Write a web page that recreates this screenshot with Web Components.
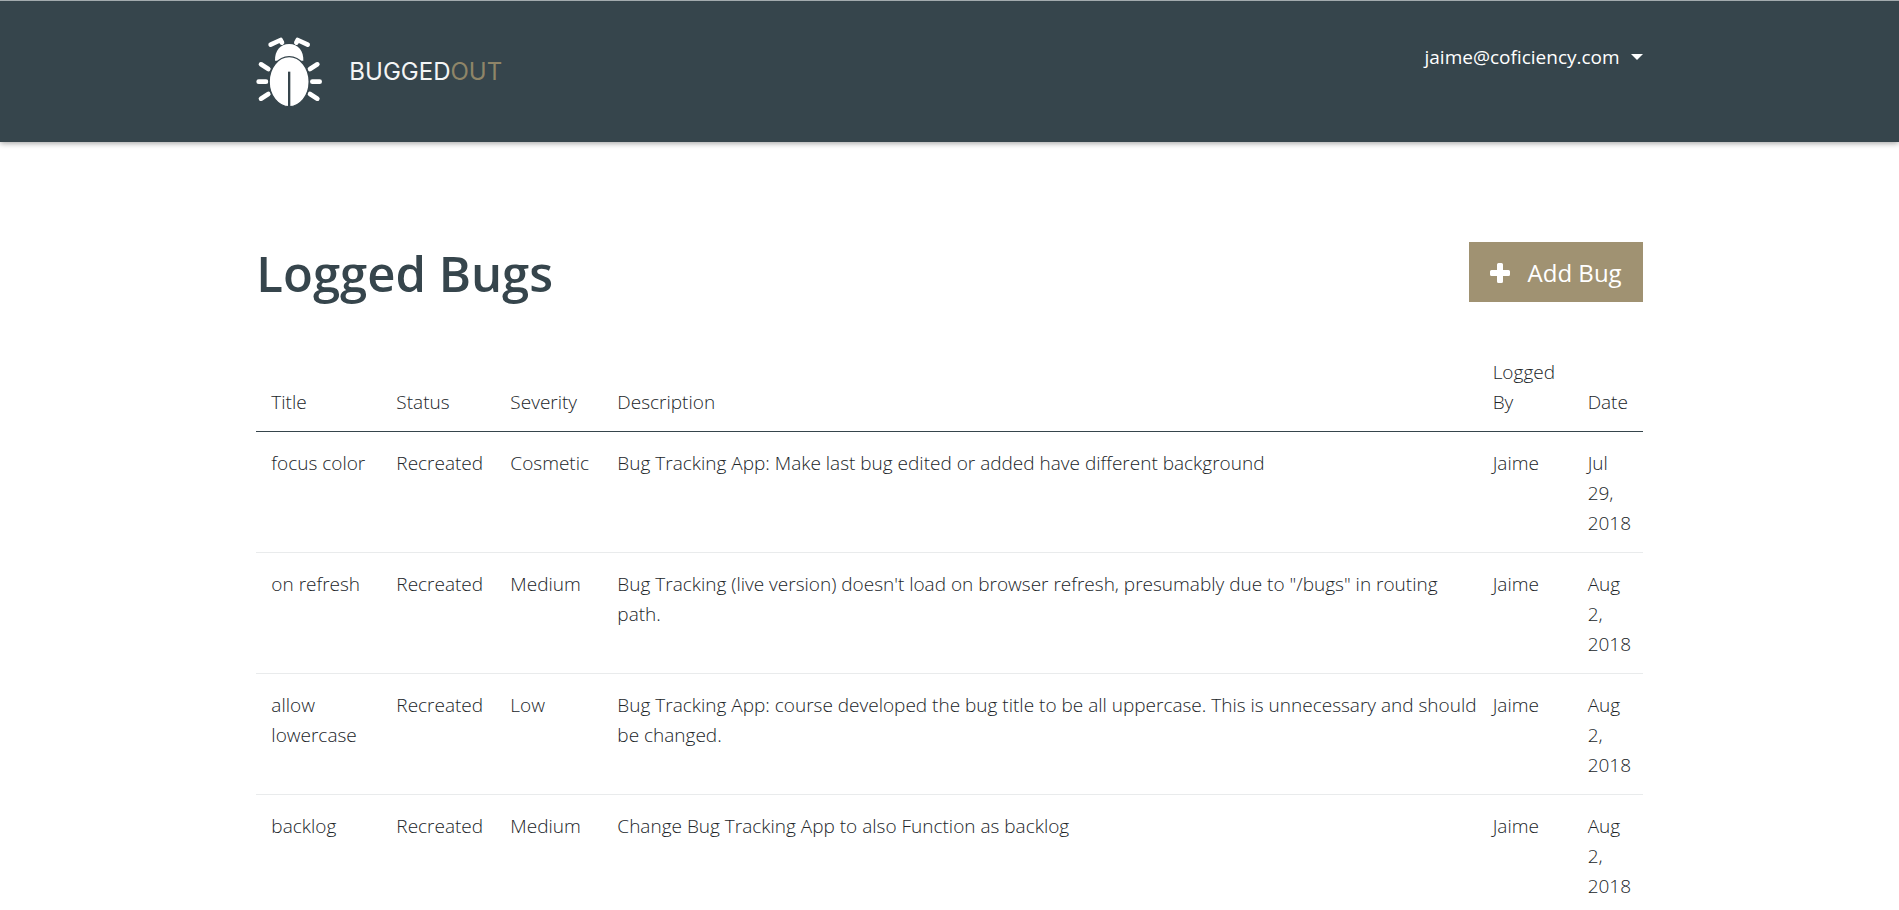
<!DOCTYPE html>
<html lang="en">
<head>
<meta charset="utf-8">
<title>BuggedOut</title>
<style>
  body {
    margin: 0;
    background: #fff;
    color: #212529;
    font: 300 19px/30px "Open Sans", "Noto Sans", sans-serif;
    --slate: #36454c;
    --sand: #a09272;
    --content: 73%;
  }
</style>
</head>
<body>
<app-header>
  <brand-logo></brand-logo>
  <user-menu slot="account">jaime@coficiency.com</user-menu>
</app-header>
<bug-page>
  <span slot="title">Logged Bugs</span>
  <add-button slot="action">Add Bug</add-button>
  <bug-table></bug-table>
</bug-page>

<script>
class ShadowElement extends HTMLElement {
  connectedCallback() {
    if (this.shadowRoot) return;
    this.attachShadow({ mode: 'open' }).innerHTML = this.render();
  }
}

customElements.define('app-header', class extends ShadowElement {
  render() {
    return `
      <style>
        :host { display: block; background: var(--slate); border-top: 1px solid #a3abae; box-shadow: 0 1px 6px rgba(0,0,0,.4); }
        header { width: var(--content); margin: 0 auto; padding: 35px 0 34px; display: flex; justify-content: space-between; align-items: flex-start; }
      </style>
      <header><slot></slot><slot name="account"></slot></header>`;
  }
});

customElements.define('brand-logo', class extends ShadowElement {
  render() {
    return `
      <style>
        :host { display: block; }
        a { display: flex; align-items: center; gap: 26px; color: #f4f5f5; text-decoration: none; font: 400 24px/30px Inter, sans-serif; }
        svg { display: block; }
        b { font-weight: inherit; color: #8f8568; }
      </style>
      <a href="#">
        <svg width="67" height="72" viewBox="18 18 201 216" aria-hidden="true">
          <g fill="none" stroke="#fff" stroke-width="14" stroke-linecap="round" stroke-linejoin="round">
            <path d="M62 44 92 30 96 38M173 44 143 30 139 38"/>
            <path d="M33 103 55 117M26 155H48M33 206 55 192M202 103 180 117M209 155H187M202 206 180 192"/>
          </g>
          <path fill="#fff" d="M75 92C74 63 90 42 117.500 42S161 63 160 92Z"/>
          <ellipse cx="117.500" cy="155" rx="60" ry="75" fill="#fff" stroke="#36454c" stroke-width="4"/>
          <path d="M117.500 125V230" stroke="#36454c" stroke-width="7"/>
        </svg>
        <span>BUGGED<b>OUT</b></span>
      </a>`;
  }
});

customElements.define('user-menu', class extends ShadowElement {
  render() {
    return `
      <style>
        :host { display: block; }
        button { display: flex; align-items: center; gap: 11px; border: 0; padding: 0; background: none; color: #fff; font: inherit; font-weight: 400; line-height: 42px; cursor: pointer; }
        i { border: 6px solid transparent; border-top-color: #fff; border-bottom: 0; }
      </style>
      <button type="button" aria-haspopup="menu"><slot></slot><i></i></button>`;
  }
});

customElements.define('bug-page', class extends ShadowElement {
  render() {
    return `
      <style>
        :host { display: block; width: var(--content); margin: 100px auto 0; }
        .bar { display: flex; justify-content: space-between; align-items: flex-start; margin-bottom: 37px; }
        h1 { margin: 0; color: var(--slate); font-size: 49px; font-weight: 600; line-height: 62px; }
      </style>
      <main>
        <div class="bar"><h1><slot name="title"></slot></h1><slot name="action"></slot></div>
        <slot></slot>
      </main>`;
  }
});

customElements.define('add-button', class extends ShadowElement {
  render() {
    return `
      <style>
        :host { display: block; }
        button { display: flex; align-items: center; gap: 18px; height: 60px; border: 0; padding: 2px 21px 0; background: var(--sand); color: #fff; font: inherit; font-size: 24px; font-weight: 400; cursor: pointer; }
      </style>
      <button type="button">
        <svg width="20" height="20" viewBox="0 0 20 20" fill="#fff" aria-hidden="true"><path d="M8.500 0h3q1.500 0 1.500 1.500V7h5.500q1.500 0 1.500 1.500v3q0 1.500-1.500 1.500H13v5.500q0 1.500-1.500 1.500h-3Q7 20 7 18.500V13H1.500Q0 13 0 11.500v-3Q0 7 1.500 7H7V1.500Q7 0 8.500 0Z"/></svg>
        <slot></slot>
      </button>`;
  }
});

const columns = [['Title', 125], ['Status', 114], ['Severity', 107], ['Description'], ['Logged By', 95], ['Date', 70]];
const bugs = [
  ['focus color', 'Recreated', 'Cosmetic', 'Bug Tracking App: Make last bug edited or added have different background', 'Jaime', 'Jul 29, 2018'],
  ['on refresh', 'Recreated', 'Medium', 'Bug Tracking (live version) doesn\'t load on browser refresh, presumably due to "/bugs" in routing path.', 'Jaime', 'Aug 2, 2018'],
  ['allow lowercase', 'Recreated', 'Low', 'Bug Tracking App: course developed the bug title to be all uppercase. This is unnecessary and should be changed.', 'Jaime', 'Aug 2, 2018'],
  ['backlog', 'Recreated', 'Medium', 'Change Bug Tracking App to also Function as backlog', 'Jaime', 'Aug 2, 2018'],
];

customElements.define('bug-table', class extends ShadowElement {
  render() {
    return `
      <style>
        :host { display: block; }
        table { width: 100%; table-layout: fixed; border-spacing: 0; }
        th, td { padding: 16px 0 14px 15px; text-align: left; font-weight: 300; }
        th { vertical-align: bottom; border-bottom: 1px solid var(--slate); }
        td { vertical-align: top; border-bottom: 1px solid #e9ebec; }
        th:nth-child(5) { padding-right: 15px; }
        td:last-child { padding-right: 15px; }
      </style>
      <table>
        <colgroup>${columns.map(([, w]) => `<col${w ? ` style="width:${w}px"` : ''}>`).join('')}</colgroup>
        <thead><tr>${columns.map(([name]) => `<th scope="col">${name}</th>`).join('')}</tr></thead>
        <tbody>${bugs.map(row => `<tr>${row.map(cell => `<td>${cell}</td>`).join('')}</tr>`).join('')}</tbody>
      </table>`;
  }
});
</script>
</body>
</html>
